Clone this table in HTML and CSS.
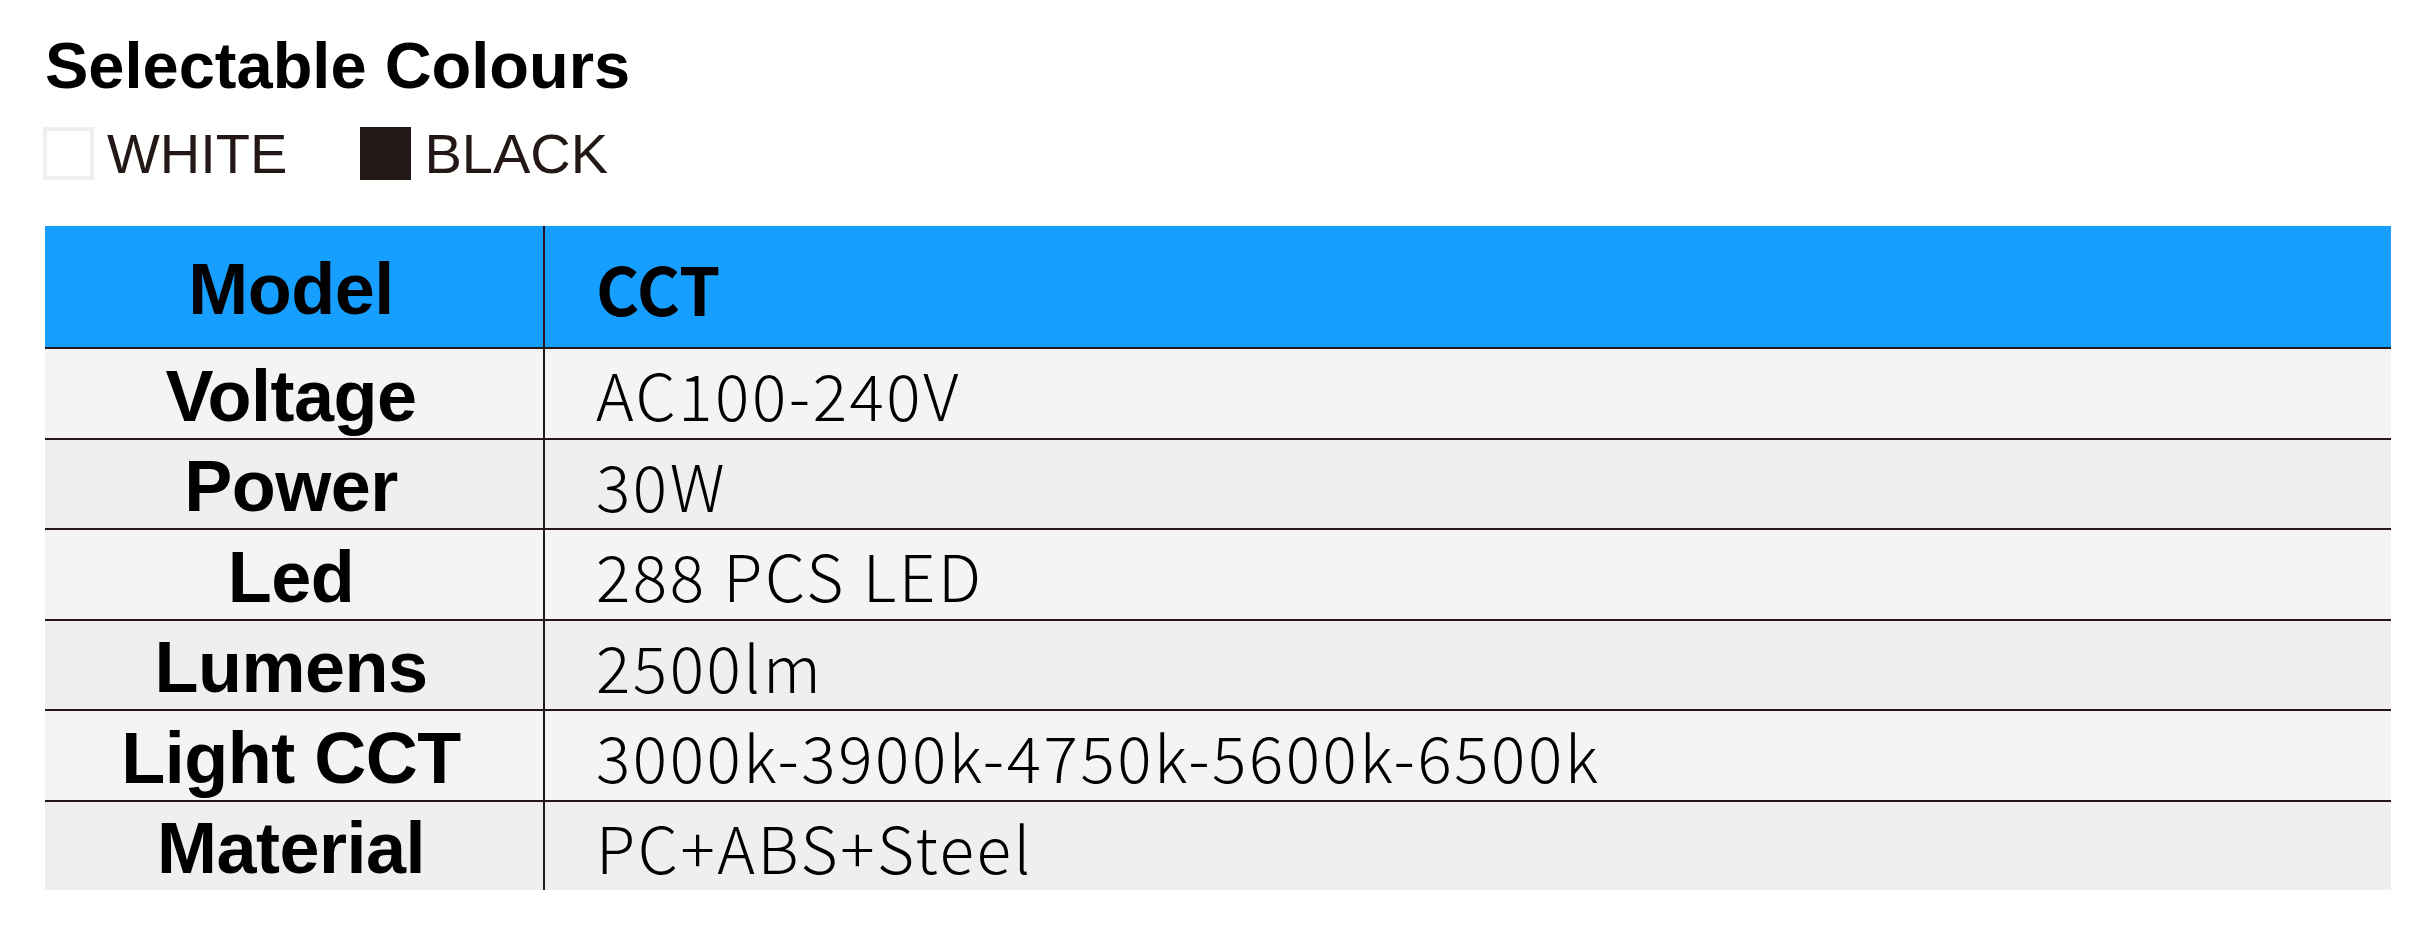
FILE: index.html
```html
<!DOCTYPE html>
<html lang="en">
<head>
<meta charset="utf-8">
<title>Selectable Colours</title>
<link rel="stylesheet" href="styles.css">
</head>
<body>
<div class="page">
  <h1 class="title">Selectable Colours</h1>
  <div class="swatches">
    <div class="swatch"><span class="chip chip-white"></span><span class="swatch-label">WHITE</span></div>
    <div class="swatch"><span class="chip chip-black"></span><span class="swatch-label">BLACK</span></div>
  </div>
  <div class="spec">
    <div class="row row-head"><div class="key">Model</div><div class="val val-head">CCT</div></div>
    <div class="row row-light"><div class="key">Voltage</div><div class="val">AC100-240V</div></div>
    <div class="row row-dark"><div class="key">Power</div><div class="val">30W</div></div>
    <div class="row row-light"><div class="key">Led</div><div class="val">288 PCS LED</div></div>
    <div class="row row-dark"><div class="key">Lumens</div><div class="val">2500lm</div></div>
    <div class="row row-light"><div class="key">Light CCT</div><div class="val">3000k-3900k-4750k-5600k-6500k</div></div>
    <div class="row row-dark"><div class="key">Material</div><div class="val">PC+ABS+Steel</div></div>
  </div>
</div>
</body>
</html>
```

FILE: styles.css
```css
html, body {
  margin: 0;
  padding: 0;
  background: #ffffff;
}

.page {
  padding: 33px 0 0 45px;
}

.title {
  margin: 0;
  height: 65px;
  font: 700 65px/1 "Liberation Sans", Arial, sans-serif;
  color: #000000;
}

.swatches {
  display: flex;
  align-items: center;
  margin-top: 29px;
  height: 53px;
}

.swatch {
  display: flex;
  align-items: center;
  gap: 13px;
}

.swatch + .swatch {
  margin-left: 73px;
}

.chip {
  box-sizing: border-box;
  width: 51px;
  height: 53px;
}

.chip-white {
  margin-left: -2px;
  border: 4px solid #efefef;
  background: #ffffff;
}

.chip-black {
  background: #231815;
}

.swatch-label {
  font: 400 56px/53px "Liberation Sans", Arial, sans-serif;
  color: #231815;
}

.spec {
  margin-top: 46px;
  width: 2346px;
}

.row {
  display: grid;
  grid-template-columns: 500px 1fr;
  height: 88.5px;
  border-top: 2px solid #231815;
}

.row-head {
  height: 121px;
  border-top: 0;
  background: #179fff;
}

.row-light {
  background: #f4f4f4;
}

.row-dark {
  background: #efefef;
}

.key {
  display: flex;
  align-items: center;
  justify-content: center;
  border-right: 2px solid #231815;
  padding: 5px 6px 0 0;
  font: 700 72px/1 "Liberation Sans", Arial, sans-serif;
  letter-spacing: -0.5px;
  color: #000000;
}

.val {
  display: flex;
  align-items: center;
  padding-left: 51px;
  font: 300 64px/1 "Noto Sans CJK SC", "Noto Sans", sans-serif;
  letter-spacing: 2.6px;
  color: #000000;
}

.val-head {
  font-weight: 700;
  font-size: 66px;
  letter-spacing: 0;
}
```
